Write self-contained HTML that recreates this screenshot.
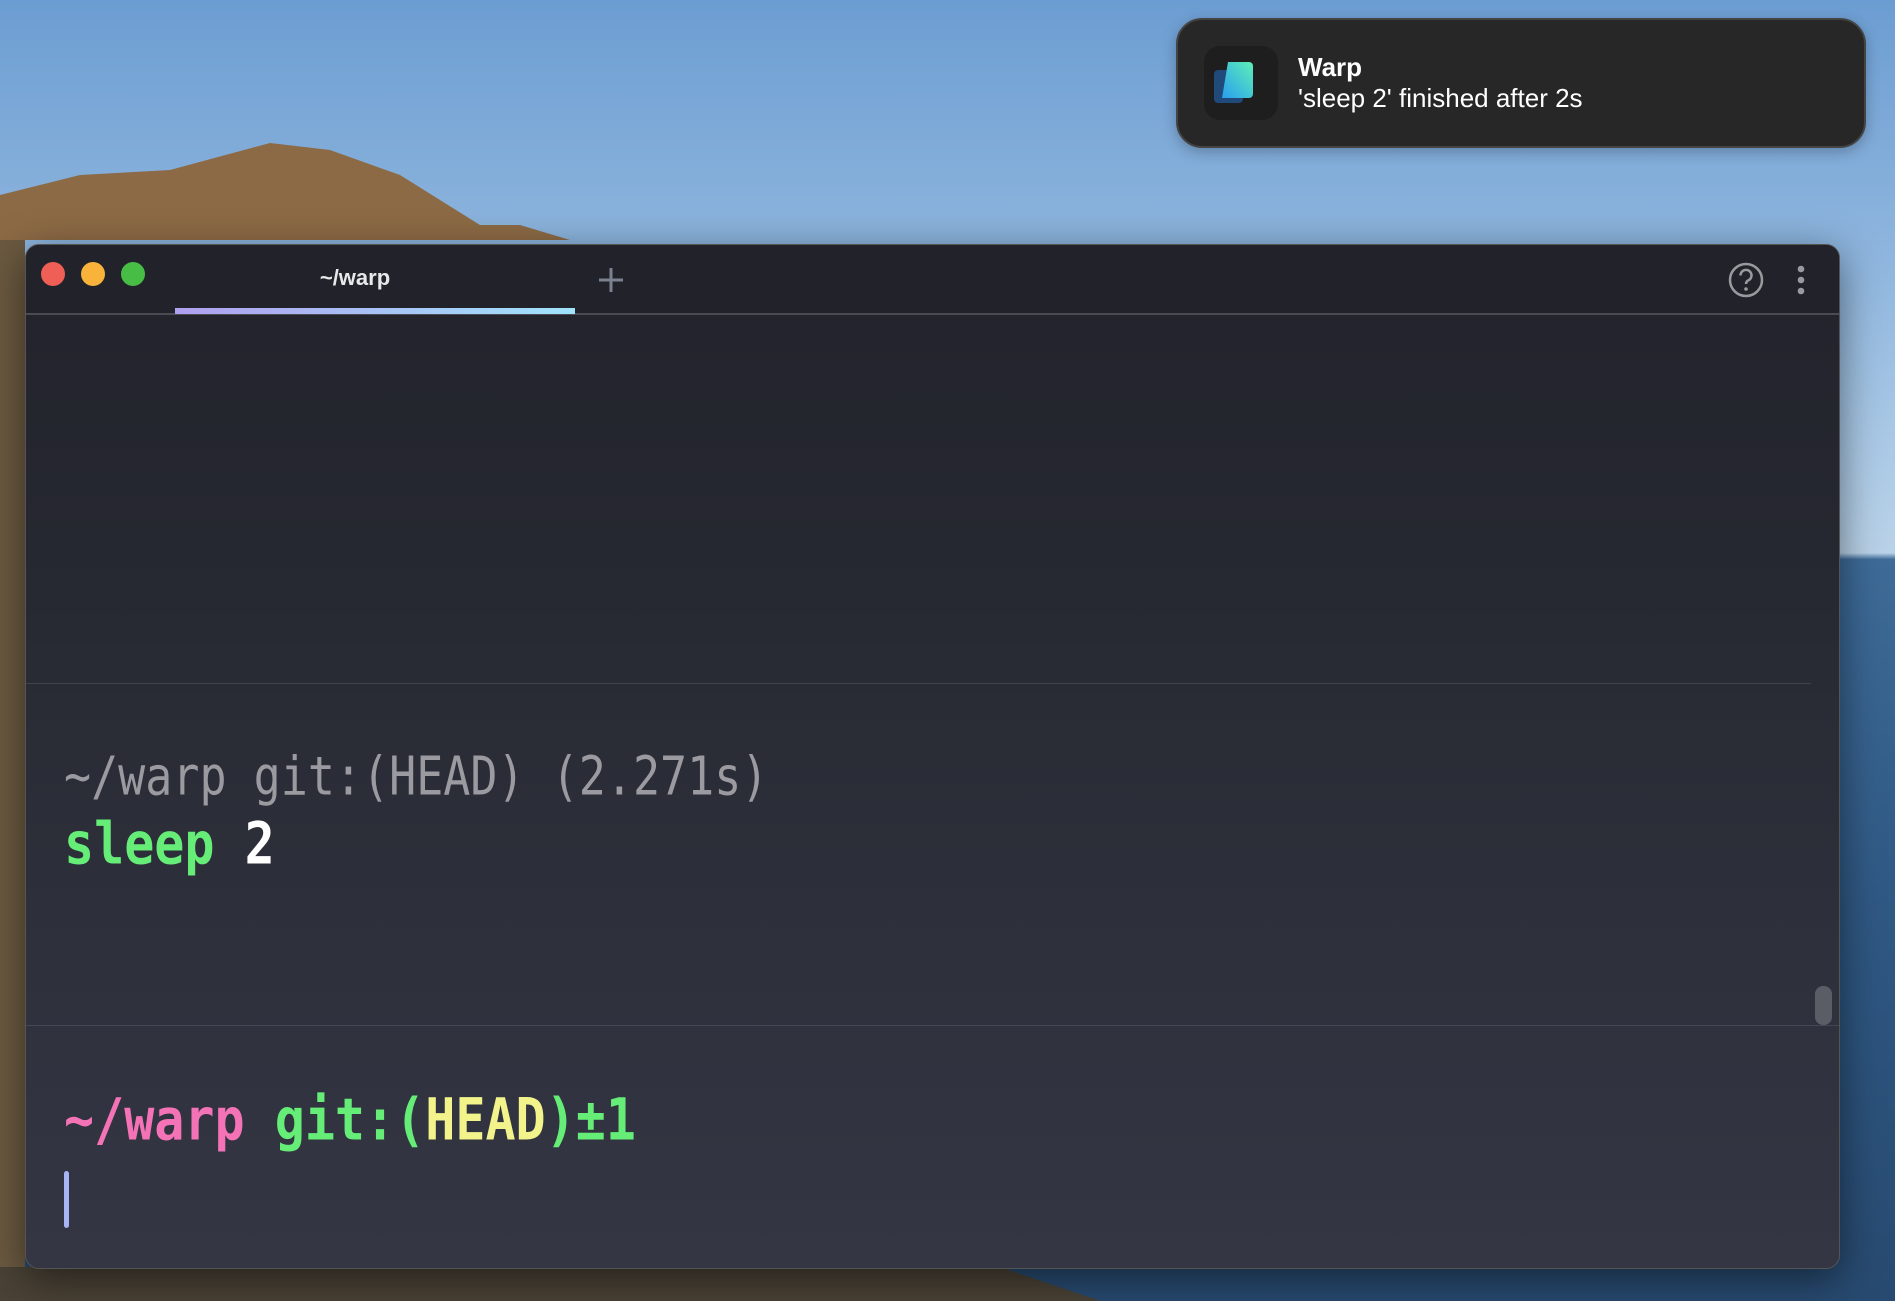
<!DOCTYPE html>
<html><head><meta charset="utf-8"><style>
html,body{margin:0;padding:0;width:1895px;height:1301px;overflow:hidden;font-family:"Liberation Sans",sans-serif}
#bg{position:absolute;inset:0;background:linear-gradient(180deg,#6c9dd2 0%,#8fb6de 20%,#aac9e6 34%,#b9d2e8 42.5%,#3e6b98 43%,#2f5883 70%,#284a70 100%)}
#win{position:absolute;left:25px;top:244px;width:1813px;height:1023px;border-radius:14px;overflow:hidden;border:1px solid #555;box-shadow:0 10px 40px rgba(0,0,0,.5);background:linear-gradient(180deg,#22232b 0%,#262831 30%,#2c2e39 60%,#343644 100%)}
#bar{position:absolute;left:0;top:0;width:100%;height:68px;background:#21222a;border-bottom:2px solid #4a4b53}
.tl{position:absolute;top:17px;width:24px;height:24px;border-radius:50%}
.mono{font-family:"DejaVu Sans Mono","Liberation Mono",monospace;position:absolute;white-space:pre;transform-origin:0 50%}
</style></head><body>
<div id="bg"></div>
<svg style="position:absolute;left:0;top:0" width="1895" height="1301">
<polygon points="0,195 80,175 170,170 270,143 330,150 400,175 440,200 480,225 520,225 570,240 0,240" fill="#8c6a45"/>
<polygon points="0,240 25,240 25,1301 0,1301" fill="#6b5a40"/>
<polygon points="0,1267 1000,1267 1100,1301 0,1301" fill="#4a4236"/>
</svg>
<div id="win">
 <div id="bar">
  <div class="tl" style="left:15px;background:#f05f56"></div>
  <div class="tl" style="left:55px;background:#f9b33b"></div>
  <div class="tl" style="left:95px;background:#47bd46"></div>
  <div style="position:absolute;left:129px;width:400px;top:0;height:68px;line-height:66px;text-align:center;color:#e8e8ea;font-size:22px;font-weight:bold">~/warp</div>
  <div style="position:absolute;left:149px;width:400px;top:63px;height:6px;background:linear-gradient(90deg,#b0a0ef,#a0e4fb)"></div>
  <svg style="position:absolute;left:570px;top:20px" width="30" height="30"><path d="M15 3V27M3 15H27" stroke="#7c8190" stroke-width="3"/></svg>
  <svg style="position:absolute;left:1700px;top:15px" width="40" height="40"><circle cx="20" cy="20" r="16" fill="none" stroke="#9a9a9e" stroke-width="2.5"/><path d="M14.5 15.5a5.5 5.5 0 1 1 7.5 5c-1.5.8-2 1.6-2 3.5" fill="none" stroke="#9a9a9e" stroke-width="2.5"/><circle cx="20" cy="29" r="1.8" fill="#9a9a9e"/></svg>
  <svg style="position:absolute;left:1765px;top:15px" width="20" height="40"><circle cx="10" cy="9" r="3.3" fill="#9a9a9e"/><circle cx="10" cy="20" r="3.3" fill="#9a9a9e"/><circle cx="10" cy="31" r="3.3" fill="#9a9a9e"/></svg>
 </div>
 <div style="position:absolute;left:0;top:438px;width:1785px;height:1px;background:#40424c"></div>
 <div style="position:absolute;left:0;top:780px;width:100%;height:1px;background:#454754"></div>
 <div class="mono" style="left:38px;top:505px;font-size:45px;line-height:54px;color:#9a9aa0;transform:scaleY(1.18)">~/warp git:(HEAD) (2.271s)</div>
 <div class="mono" style="left:38px;top:572px;font-size:50px;line-height:54px;font-weight:bold;color:#66ed78;transform:scaleY(1.15)">sleep <span style="color:#fff">2</span></div>
 <div class="mono" style="left:38px;top:845px;font-size:50px;line-height:60px;font-weight:bold;color:#66ed78;transform:scaleY(1.15)"><span style="color:#f473b6">~/warp</span> git:(<span style="color:#f2f38a">HEAD</span>)±1</div>
 <div style="position:absolute;left:38px;top:926px;width:5px;height:57px;border-radius:3px;background:#a8b4f3"></div>
 <div style="position:absolute;left:1789px;top:741px;width:17px;height:39px;border-radius:8px;background:#5b5d66"></div>
</div>
<div style="position:absolute;left:1176px;top:18px;width:686px;height:126px;border-radius:26px;background:#272727;border:2px solid #444;box-shadow:0 4px 14px rgba(0,0,0,.25)">
 <div style="position:absolute;left:26px;top:26px;width:74px;height:74px;border-radius:16px;background:#1e1e1e">
  <svg width="74" height="74"><rect x="10" y="24" width="29" height="33" rx="4" fill="#1f4a7a"/><path d="M24 16H45a4 4 0 0 1 4 4V48a4 4 0 0 1-4 4H18Z" fill="url(#g)"/><defs><linearGradient id="g" x1="1" y1="0" x2="0" y2="1"><stop offset="0" stop-color="#5cf0b6"/><stop offset="1" stop-color="#2a9ef0"/></linearGradient></defs></svg>
 </div>
 <div style="position:absolute;left:120px;top:32px;color:#fff;font-size:26px;font-weight:bold">Warp</div>
 <div style="position:absolute;left:120px;top:63px;color:#fff;font-size:26px">'sleep 2' finished after 2s</div>
</div>
</body></html>
